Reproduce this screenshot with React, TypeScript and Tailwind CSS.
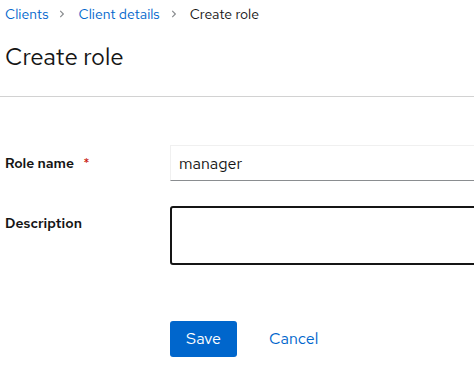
import React, { useState } from 'react';

const font = { fontFamily: '"Red Hat Text", Lato, "Liberation Sans", sans-serif' };

const Chevron: React.FC = () => (
  <svg viewBox="0 0 320 512" className="w-[6px] h-[8px] fill-[#8a8d90] ml-[11px] mr-[13px]">
    <path d="M285.476 272.971L91.132 467.314c-9.373 9.373-24.569 9.373-33.941 0l-22.667-22.667c-9.357-9.357-9.375-24.522-.04-33.901L188.505 256 34.484 101.255c-9.335-9.379-9.317-24.544.04-33.901l22.667-22.667c9.373-9.373 24.569-9.373 33.941 0L285.475 239.03c9.373 9.372 9.373 24.568.001 33.941z" />
  </svg>
);

const App: React.FC = () => {
  const [roleName, setRoleName] = useState('manager');
  const [description, setDescription] = useState('');

  return (
    <div className="w-[474px] h-[371px] overflow-hidden bg-white text-[#151515]" style={font}>
      <div className="pl-[5px] pt-[4px]">
        <nav className="flex items-center text-[14px] h-[20px]">
          <a className="text-[#0066cc]">Clients</a>
          <Chevron />
          <a className="text-[#0066cc]">Client details</a>
          <Chevron />
          <span>Create role</span>
        </nav>
        <h1 className="text-[24px] leading-[30px] mt-[18px]">Create role</h1>
      </div>
      <div className="mt-[24px] border-t border-[#d2d2d2]" />

      <form className="pl-[5px] pt-[48px]" onSubmit={(e) => e.preventDefault()}>
        <div className="flex items-center h-[36px]">
          <label className="w-[165px] shrink-0 text-[14px] font-semibold">
            Role name <span className="text-[#c9190b] ml-[6px] font-normal">*</span>
          </label>
          <input
            value={roleName}
            onChange={(e) => setRoleName(e.target.value)}
            className="w-[320px] shrink-0 h-[36px] px-[8px] text-[16px] border border-[#f0f0f0] border-b-[#8a8d90] outline-none"
          />
        </div>
        <div className="flex mt-[25px]">
          <label className="w-[165px] shrink-0 text-[14px] font-semibold pt-[7px]">Description</label>
          <textarea
            value={description}
            onChange={(e) => setDescription(e.target.value)}
            className="w-[320px] shrink-0 h-[59px] border-2 border-[#151515] rounded-[3px] outline-none resize-none"
          />
        </div>
        <div className="flex items-center ml-[165px] mt-[56px] gap-[16px]">
          <button type="submit" className="h-[36px] px-[16px] rounded-[3px] bg-[#0066cc] text-white text-[16px]">
            Save
          </button>
          <button type="button" className="h-[36px] px-[16px] text-[#0066cc] text-[16px]">
            Cancel
          </button>
        </div>
      </form>
    </div>
  );
};

export default App;
